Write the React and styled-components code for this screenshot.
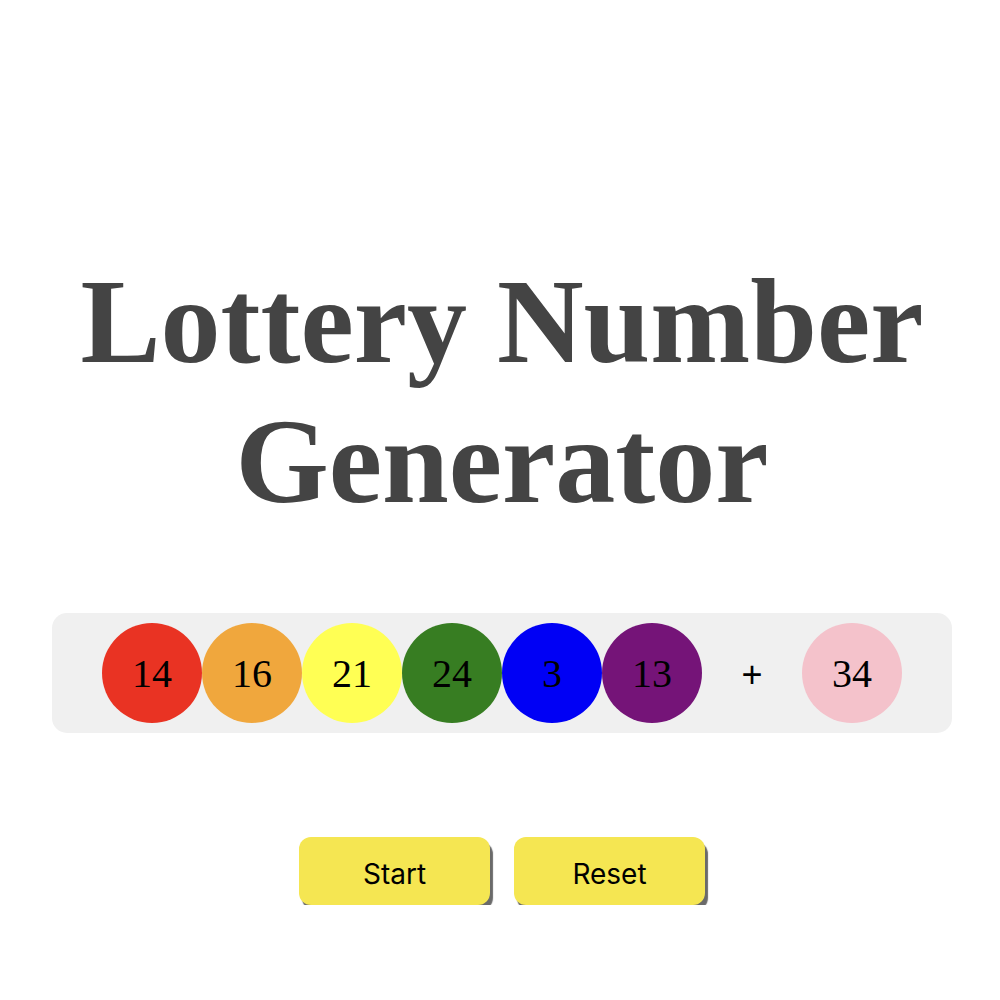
import styled, { createGlobalStyle } from 'styled-components';

const GlobalStyle = createGlobalStyle`
  html, body {
    margin: 0;
    padding: 0;
    background: #ffffff;
  }
`;

const numbers = [
  { value: 14, color: '#e93323' },
  { value: 16, color: '#f0a73d' },
  { value: 21, color: '#ffff54' },
  { value: 24, color: '#377d22' },
  { value: 3, color: '#0000f5' },
  { value: 13, color: '#751478' },
];

const bonus = { value: 34, color: '#f4c2cb' };

const Page = styled.main`
  display: flex;
  flex-direction: column;
  align-items: center;
  padding-top: 252px;
  padding-left: 4px;
  width: 1000px;
  box-sizing: border-box;
`;

const Title = styled.h1`
  margin: 0;
  font-family: 'Liberation Serif', 'Times New Roman', serif;
  font-weight: 700;
  font-size: 120px;
  line-height: 140px;
  color: #444444;
  text-align: center;
`;

const Board = styled.div`
  display: flex;
  align-items: center;
  width: 900px;
  box-sizing: border-box;
  margin-top: 81px;
  padding: 10px 50px;
  background: #f0f0f0;
  border-radius: 15px;
`;

const Ball = styled.div`
  display: flex;
  align-items: center;
  justify-content: center;
  width: 100px;
  height: 100px;
  border-radius: 50%;
  background: ${(p) => p.$color};
  font-family: 'Liberation Serif', 'Times New Roman', serif;
  font-size: 40px;
  color: #000;
`;

const Plus = styled.span`
  display: flex;
  align-items: center;
  justify-content: center;
  width: 100px;
  height: 100px;
  padding-top: 4px;
  box-sizing: border-box;
  font-family: 'Liberation Sans', Arial, sans-serif;
  font-size: 36px;
  color: #000;
`;

const Buttons = styled.div`
  display: flex;
  gap: 24px;
  margin-top: 104px;
`;

const Button = styled.button`
  width: 191px;
  height: 68px;
  padding-top: 6px;
  border: none;
  border-radius: 12px;
  background: #f5e652;
  box-shadow: 3px 5px 1px #6a6a6a;
  font-family: 'Inter', 'Liberation Sans', sans-serif;
  font-size: 28px;
  color: #000;
  cursor: pointer;
`;

const App = () => {
  return (
    <Page>
      <GlobalStyle />
      <Title>
        Lottery Number
        <br />
        Generator
      </Title>

      {/* 번호 영역 */}
      <Board>
        {numbers.map((n) => (
          <Ball key={n.value} $color={n.color}>
            {n.value}
          </Ball>
        ))}
        <Plus>+</Plus>
        <Ball $color={bonus.color}>{bonus.value}</Ball>
      </Board>

      <Buttons>
        <Button>Start</Button>
        <Button>Reset</Button>
      </Buttons>
    </Page>
  );
};

export default App;
